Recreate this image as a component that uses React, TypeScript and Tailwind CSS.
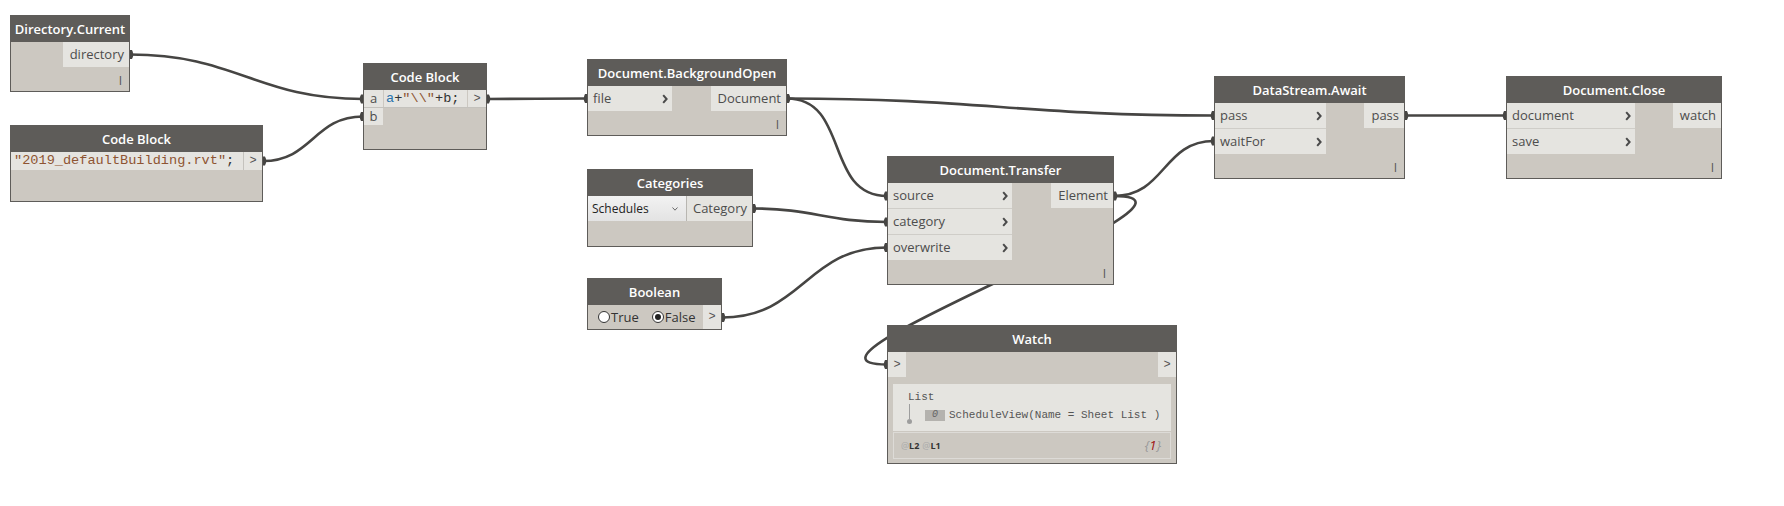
import React from "react";

const FONT = "font-['Open_Sans',sans-serif]";
const MONO = "font-['Liberation_Mono',monospace]";

function wirePath(x1: number, y1: number, x2: number, y2: number) {
  const d = Math.hypot(x2 - x1, y2 - y1) * 0.45;
  return `M${x1} ${y1} C${x1 + d} ${y1} ${x2 - d} ${y2} ${x2} ${y2}`;
}

const WIRES: [number, number, number, number][] = [
  [130, 54.5, 363, 99],
  [263, 161, 363, 116.5],
  [487, 99, 587, 98.5],
  [787, 98.5, 887, 196],
  [787, 98.5, 1214, 115.5],
  [753, 208.5, 887, 222],
  [722, 317.5, 887, 247.5],
  [1114, 196, 1214, 141],
  [1114, 196, 887, 364.5],
  [1405, 115.5, 1506, 115.5],
];

function Wires() {
  const outs = new Map<string, [number, number]>();
  const ins = new Map<string, [number, number]>();
  WIRES.forEach(([a, b, c, d]) => {
    outs.set(`${a},${b}`, [a, b]);
    ins.set(`${c},${d}`, [c, d]);
  });
  return (
    <svg className="absolute left-0 top-0" width="1784" height="506">
      {WIRES.map(([a, b, c, d], i) => (
        <path key={i} d={wirePath(a, b, c, d)} fill="none" stroke="#464543" strokeWidth="2.6" />
      ))}
      {[...outs.values()].map(([x, y], i) => (
        <path key={"o" + i} d={`M${x} ${y - 4.5} L${x + 2} ${y - 4.5} Q${x + 4.5} ${y} ${x + 2} ${y + 4.5} L${x} ${y + 4.5} Z`} fill="#464543" />
      ))}
      {[...ins.values()].map(([x, y], i) => (
        <path key={"i" + i} d={`M${x} ${y - 4.5} L${x - 2} ${y - 4.5} Q${x - 4.5} ${y} ${x - 2} ${y + 4.5} L${x} ${y + 4.5} Z`} fill="#464543" />
      ))}
    </svg>
  );
}

function Chev() {
  return (
    <svg width="6" height="10" viewBox="0 0 6 10">
      <path d="M1.2 1.2 L4.6 5 L1.2 8.8" fill="none" stroke="#4a4a4a" strokeWidth="2" />
    </svg>
  );
}

function Header({ title }: { title: string }) {
  return (
    <div className="flex h-[26px] shrink-0 items-center justify-center bg-[#5e5c59] text-[13px] font-semibold leading-none text-white">
      {title}
    </div>
  );
}

function Lacing() {
  return (
    <div className="flex flex-1 items-end justify-end pb-[4px] pr-[7px]">
      <span className="text-[12px] leading-none text-[#555]">I</span>
    </div>
  );
}

type StdProps = { cls: string; title: string; inputs: string[]; outputs: string[]; inW: string };

function StdNode({ cls, title, inputs, outputs, inW }: StdProps) {
  return (
    <div className={`absolute flex flex-col border border-[#5e5c59] bg-[#ccc8c1] ${cls}`}>
      <Header title={title} />
      <div className="flex text-[13px] leading-none text-[#4d4d4d]">
        {inputs.length > 0 && (
          <div className={`flex flex-col ${inW}`}>
            {inputs.map((n, i) => (
              <div
                key={n}
                className={`flex h-[25px] items-center justify-between bg-[#e5e4e0] pl-[5px] pr-[4px] ${
                  i < inputs.length - 1 ? "box-content border-b border-[#cfcdc8]" : ""
                }`}
              >
                <span>{n}</span>
                <Chev />
              </div>
            ))}
          </div>
        )}
        <div className="flex flex-1 flex-col items-end">
          {outputs.map((n) => (
            <div key={n} className="flex h-[25px] items-center bg-[#e5e4e0] pl-[7px] pr-[5px]">
              {n}
            </div>
          ))}
        </div>
      </div>
      <Lacing />
    </div>
  );
}

function Radio({ on, label }: { on: boolean; label: string }) {
  return (
    <div className="flex items-center gap-[1px]">
      <div className="flex h-[12px] w-[12px] items-center justify-center rounded-full border border-[#333] bg-white">
        {on && <div className="h-[6px] w-[6px] rounded-full bg-[#222]" />}
      </div>
      <span>{label}</span>
    </div>
  );
}

export default function App() {
  return (
    <div className={`relative h-[506px] w-[1784px] overflow-hidden bg-white ${FONT}`}>
      <Wires />

      <StdNode cls="left-[10px] top-[15px] w-[120px] h-[77px]" title="Directory.Current" inputs={[]} outputs={["directory"]} inW="" />

      {/* Code Block (string) */}
      <div className="absolute left-[10px] top-[125px] flex h-[77px] w-[253px] flex-col border border-[#5e5c59] bg-[#ccc8c1]">
        <Header title="Code Block" />
        <div className="flex h-[18px]">
          <div className={`flex flex-1 items-center bg-[#e5e4e0] pl-[3px] text-[13.6px] leading-none text-[#8e5432] ${MONO}`}>
            "2019_defaultBuilding.rvt"<span className="text-[#333]">;</span>
          </div>
          <div className={`flex w-[19px] items-center justify-center border-l border-[#c4c2bd] bg-[#e5e4e0] text-[12px] text-[#555] ${MONO}`}>&gt;</div>
        </div>
      </div>

      {/* Code Block (a+b) */}
      <div className="absolute left-[363px] top-[63px] flex h-[87px] w-[124px] flex-col border border-[#5e5c59] bg-[#ccc8c1]">
        <Header title="Code Block" />
        <div className="flex h-[18px] gap-px border-b border-[#c4c2bd]">
          <div className="flex w-[19px] items-center justify-center bg-[#e5e4e0] text-[13px] leading-none text-[#4d4d4d]">a</div>
          <div className={`flex flex-1 items-center bg-[#e5e4e0] pl-[2px] text-[13.6px] leading-none text-[#333] ${MONO}`}>
            <span className="text-[#2a74ad]">a</span>+<span className="text-[#8e5432]">"\\"</span>+b;
          </div>
          <div className={`flex w-[18px] items-center justify-center bg-[#e5e4e0] text-[12px] text-[#555] ${MONO}`}>&gt;</div>
        </div>
        <div className="flex h-[17px]">
          <div className="flex w-[19px] items-center justify-center bg-[#e5e4e0] text-[13px] leading-none text-[#4d4d4d]">b</div>
        </div>
      </div>

      <StdNode cls="left-[587px] top-[59px] w-[200px] h-[77px]" title="Document.BackgroundOpen" inputs={["file"]} outputs={["Document"]} inW="w-[84px]" />

      {/* Categories */}
      <div className="absolute left-[587px] top-[169px] flex h-[78px] w-[166px] flex-col border border-[#5e5c59] bg-[#ccc8c1]">
        <Header title="Categories" />
        <div className="flex h-[25px] text-[13px] leading-none text-[#4d4d4d]">
          <div className="flex w-[99px] items-center justify-between border-r border-[#b8b6b1] bg-gradient-to-b from-[#f2f2f2] to-[#e3e3e3] pl-[4px] pr-[8px] text-[12px] text-[#222]">
            <span>Schedules</span>
            <svg width="6" height="4" viewBox="0 0 6 4">
              <path d="M0.5 0.5 L3 3.2 L5.5 0.5" fill="none" stroke="#666" strokeWidth="1" />
            </svg>
          </div>
          <div className="flex flex-1 items-center justify-end bg-[#e5e4e0] pr-[5px]">Category</div>
        </div>
      </div>

      {/* Boolean */}
      <div className="absolute left-[587px] top-[278px] flex h-[52px] w-[135px] flex-col border border-[#5e5c59] bg-[#ccc8c1]">
        <Header title="Boolean" />
        <div className="flex h-[24px] text-[13px] leading-none text-[#333]">
          <div className="flex flex-1 items-center gap-[13px] pl-[10px]">
            <Radio on={false} label="True" />
            <Radio on={true} label="False" />
          </div>
          <div className={`flex w-[18px] items-center justify-center bg-[#e5e4e0] text-[12px] text-[#555] ${MONO}`}>&gt;</div>
        </div>
      </div>

      <StdNode cls="left-[887px] top-[156px] w-[227px] h-[129px]" title="Document.Transfer" inputs={["source", "category", "overwrite"]} outputs={["Element"]} inW="w-[124px]" />

      {/* Watch */}
      <div className="absolute left-[887px] top-[325px] flex h-[139px] w-[290px] flex-col border border-[#5e5c59] bg-[#ccc8c1]">
        <Header title="Watch" />
        <div className={`flex h-[25px] justify-between text-[12px] text-[#555] ${MONO}`}>
          <div className="flex w-[18px] items-center justify-center bg-[#e5e4e0]">&gt;</div>
          <div className="flex w-[18px] items-center justify-center bg-[#e5e4e0]">&gt;</div>
        </div>
        <div className="flex flex-1 flex-col gap-px px-[5px] pb-[4px] pt-[7px]">
          <div className={`flex h-[47px] flex-col bg-[#e5e4e0] pl-[15px] pt-[8px] text-[11px] leading-none text-[#555] ${MONO}`}>
            <span className="h-[12px]">List</span>
            <div className="flex">
              <div className="flex w-[17px] flex-col items-start">
                <div className="ml-[1px] h-[15px] w-px bg-[#9d9d9d]" />
                <div className="-ml-[1px] h-[5px] w-[5px] rounded-full bg-[#9d9d9d]" />
              </div>
              <div className="flex h-[20px] items-center gap-[4px] pt-[2px]">
                <span className="flex h-[11px] w-[20px] items-center justify-center bg-[#b4b2ae] text-[10px] italic text-[#666]">0</span>
                <span>ScheduleView(Name = Sheet List )</span>
              </div>
            </div>
          </div>
          <div className="flex flex-1 items-center justify-between border border-[#dddbd7] pl-[7px] pr-[9px] text-[9px] leading-none">
            <span className="flex gap-[3px] text-[#333]">
              <span><span className="text-[#aaa]">@</span><b>L2</b></span>
              <span><span className="text-[#aaa]">@</span><b>L1</b></span>
            </span>
            <span className="text-[13px] italic text-[#999]">
              {"{"}<span className="text-[#a01010]">1</span>{"}"}
            </span>
          </div>
        </div>
      </div>

      <StdNode cls="left-[1214px] top-[76px] w-[191px] h-[103px]" title="DataStream.Await" inputs={["pass", "waitFor"]} outputs={["pass"]} inW="w-[111px]" />
      <StdNode cls="left-[1506px] top-[76px] w-[216px] h-[103px]" title="Document.Close" inputs={["document", "save"]} outputs={["watch"]} inW="w-[128px]" />
    </div>
  );
}
